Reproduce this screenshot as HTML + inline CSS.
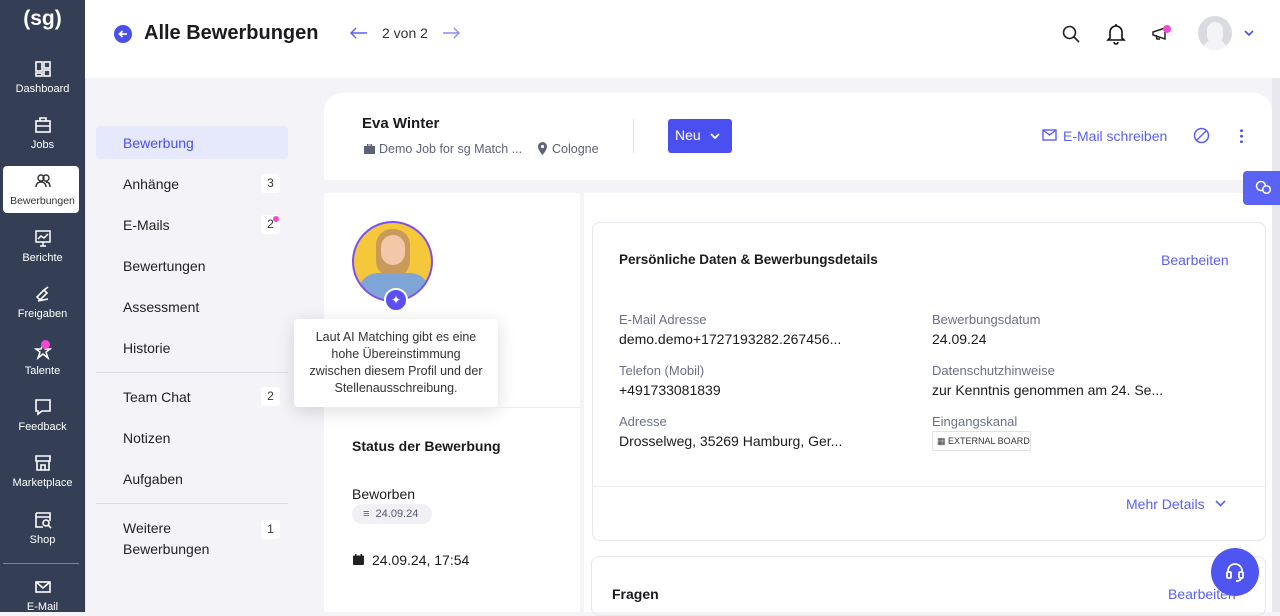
<!DOCTYPE html>
<html><head><meta charset="utf-8"><style>
*{box-sizing:border-box;margin:0;padding:0}
body{width:1280px;height:612px;overflow:hidden;background:#f4f4f8;font-family:"Liberation Sans",sans-serif;color:#1b1b1f;position:relative}
.abs{position:absolute}
#side{left:0;top:0;width:85px;height:612px;background:#343f56;color:#fff}
.si{position:absolute;left:0;width:85px;text-align:center;font-size:11px;color:#fff}
.si svg{display:block;margin:0 auto 5px}
#top{left:85px;top:0;width:1195px;height:78px;background:#fff}
.nav{position:absolute;left:96px;width:192px;font-size:14px;color:#222;padding-left:27px}
.badge{position:absolute;right:8px;top:-2px;width:19px;height:19px;background:#fff;border-radius:3px;font-size:12px;text-align:center;line-height:19px;color:#333}
.lbl{font-size:13px;color:#6b7088}
.val{font-size:14px;color:#1b1b1f;margin-top:4px}
</style></head><body>
<div id="side" class="abs">
 <div class="abs" style="left:0;top:7px;width:85px;text-align:center;font-size:21px;font-weight:bold;color:#fff">(sg)</div>
 <div class="si" style="top:60px"><svg width="18" height="18" viewBox="0 0 18 18" fill="none" stroke="#fff" stroke-width="1.6"><rect x="2" y="2" width="6" height="9"/><rect x="10" y="2" width="6" height="6"/><rect x="2" y="13" width="6" height="3"/><rect x="10" y="10" width="6" height="6"/></svg>Dashboard</div>
 <div class="si" style="top:116px"><svg width="18" height="18" viewBox="0 0 18 18" fill="none" stroke="#fff" stroke-width="1.6"><rect x="2" y="5" width="14" height="11"/><path d="M6 5V2h6v3M2 10h14"/></svg>Jobs</div>
 <div class="abs" style="left:3px;top:166px;width:76px;height:47px;background:#fff;border-radius:4px"></div>
 <div class="si" style="top:172px;color:#333;font-size:10.5px"><svg width="18" height="18" viewBox="0 0 18 18" fill="none" stroke="#333" stroke-width="1.4"><circle cx="7" cy="6" r="3"/><circle cx="12" cy="6" r="3"/><path d="M2 15c0-3 2-5 5-5s5 2 5 5M12 10c3 0 4 2 4 5"/></svg>Bewerbungen</div>
 <div class="si" style="top:229px"><svg width="18" height="18" viewBox="0 0 18 18" fill="none" stroke="#fff" stroke-width="1.5"><rect x="2" y="2" width="14" height="11"/><path d="M4 10l3-3 3 2 4-4M9 13v4M6 17h6"/></svg>Berichte</div>
 <div class="si" style="top:285px"><svg width="18" height="18" viewBox="0 0 18 18" fill="none" stroke="#fff" stroke-width="1.6"><path d="M3 12l7-7 3 3-7 7zM10 5l4-3M4 16l10-2"/></svg>Freigaben</div>
 <div class="si" style="top:342px"><svg width="18" height="18" viewBox="0 0 18 18" fill="none" stroke="#fff" stroke-width="1.5"><path d="M9 2l2 5h5l-4 3 2 6-5-4-5 4 2-6-4-3h5z"/></svg>Talente</div>
 <div class="abs" style="left:41px;top:340px;width:9px;height:9px;border-radius:50%;background:#f04bd2"></div>
 <div class="si" style="top:398px"><svg width="18" height="18" viewBox="0 0 18 18" fill="none" stroke="#fff" stroke-width="1.6"><path d="M2 2h14v11H8l-4 3v-3H2z"/></svg>Feedback</div>
 <div class="si" style="top:454px"><svg width="18" height="18" viewBox="0 0 18 18" fill="none" stroke="#fff" stroke-width="1.6"><path d="M2 2h14v5H2zM3 7v9h12V7M7 16v-5h4v5"/></svg>Marketplace</div>
 <div class="si" style="top:511px"><svg width="18" height="18" viewBox="0 0 18 18" fill="none" stroke="#fff" stroke-width="1.6"><path d="M2 2h14v8M2 2v14h7M2 6h14"/><circle cx="12" cy="12" r="3"/><path d="M14 14l3 3"/></svg>Shop</div>
 <div class="abs" style="left:3px;top:563px;width:76px;height:1px;background:#7d8598"></div>
 <div class="si" style="top:578px"><svg width="18" height="18" viewBox="0 0 18 18" fill="none" stroke="#fff" stroke-width="1.6"><rect x="2" y="4" width="14" height="10"/><path d="M2 4l7 6 7-6"/></svg>E-Mail</div>
</div>
<div id="top" class="abs">
 <svg class="abs" style="left:29px;top:25px" width="18" height="18" viewBox="0 0 18 18"><circle cx="9" cy="9" r="9" fill="#4a4ff0"/><path d="M13 9H5.5M8.5 6L5.5 9l3 3" fill="none" stroke="#fff" stroke-width="1.8"/></svg>
 <div class="abs" style="left:59px;top:22px;font-size:20px;font-weight:600">Alle Bewerbungen</div>
 <svg class="abs" style="left:265px;top:27px" width="18" height="12" viewBox="0 0 18 12" fill="none" stroke="#5a5ff2" stroke-width="1.4"><path d="M17 6H1M6 1L1 6l5 5"/></svg>
 <div class="abs" style="left:297px;top:25px;font-size:14px;color:#333">2 von 2</div>
 <svg class="abs" style="left:357px;top:27px" width="18" height="12" viewBox="0 0 18 12" fill="none" stroke="#8a8ef5" stroke-width="1.4"><path d="M1 6h16M12 1l5 5-5 5"/></svg>
 <svg class="abs" style="left:976px;top:24px" width="20" height="20" viewBox="0 0 20 20" fill="none" stroke="#222" stroke-width="1.6"><circle cx="8.5" cy="8.5" r="6"/><path d="M13 13l5 5"/></svg>
 <svg class="abs" style="left:1021px;top:23px" width="20" height="22" viewBox="0 0 20 22" fill="none" stroke="#111" stroke-width="1.6"><path d="M4 15V9a6 6 0 0112 0v6l2 2H2zM8 19a2 2 0 004 0M10 1v2"/></svg>
 <svg class="abs" style="left:1066px;top:25px" width="20" height="18" viewBox="0 0 20 18" fill="none" stroke="#222" stroke-width="1.5"><path d="M2 7l12-4v11L2 10zM5 10l1 4h3"/></svg>
 <div class="abs" style="left:1078px;top:25px;width:8px;height:8px;border-radius:50%;background:#f04bd2"></div>
 <div class="abs" style="left:1113px;top:16px;width:34px;height:34px;border-radius:50%;background:#d9dbe0;overflow:hidden"><div style="position:absolute;left:9px;top:6px;width:16px;height:22px;border-radius:8px;background:#f4f4f6"></div><div style="position:absolute;left:4px;top:24px;width:26px;height:14px;border-radius:12px 12px 0 0;background:#f4f4f6"></div></div>
 <svg class="abs" style="left:1159px;top:30px" width="10" height="7" viewBox="0 0 10 7" fill="none" stroke="#4a4ff0" stroke-width="1.6"><path d="M1 1l4 4 4-4"/></svg>
</div>
<div class="abs" style="left:85px;top:78px;width:1px;height:534px;background:#e4e4ea"></div>
<div class="abs" style="left:1272px;top:78px;width:8px;height:534px;background:#e8e8ee"></div>
<!-- left nav -->
<div class="abs" style="left:96px;top:126px;width:192px;height:33px;background:#e6e8fb;border-radius:4px"></div>
<div class="nav" style="top:135px;color:#4a4ff0">Bewerbung</div>
<div class="nav" style="top:176px">Anhänge<span class="badge">3</span></div>
<div class="nav" style="top:217px">E-Mails<span class="badge">2</span></div>
<div class="abs" style="left:273px;top:216px;width:6px;height:6px;border-radius:50%;background:#f04bd2"></div>
<div class="nav" style="top:258px">Bewertungen</div>
<div class="nav" style="top:299px">Assessment</div>
<div class="nav" style="top:340px">Historie</div>
<div class="abs" style="left:96px;top:372px;width:192px;height:1px;background:#dcdce4"></div>
<div class="nav" style="top:389px">Team Chat<span class="badge">2</span></div>
<div class="nav" style="top:430px">Notizen</div>
<div class="nav" style="top:471px">Aufgaben</div>
<div class="abs" style="left:96px;top:503px;width:192px;height:1px;background:#dcdce4"></div>
<div class="nav" style="top:518px;line-height:21px">Weitere<br>Bewerbungen<span class="badge" style="top:2px">1</span></div>
<!-- header card -->
<div class="abs" style="left:324px;top:93px;width:948px;height:87px;background:#fff;border-radius:18px 18px 0 0"></div>
<div class="abs" style="left:362px;top:115px;font-size:15px;font-weight:600">Eva Winter</div>
<svg class="abs" style="left:364px;top:144px" width="11" height="10" viewBox="0 0 11 10" fill="#5d6276"><rect x="0" y="2" width="11" height="8"/><rect x="3.5" y="0" width="4" height="2" fill="none" stroke="#5d6276"/></svg>
<div class="abs" style="left:379px;top:142px;font-size:12.5px;color:#5d6276;white-space:nowrap">Demo Job for sg Match ...</div>
<svg class="abs" style="left:538px;top:142px" width="9" height="13" viewBox="0 0 9 13" fill="#5d6276"><path d="M4.5 0A4.5 4.5 0 000 4.5C0 8 4.5 13 4.5 13S9 8 9 4.5A4.5 4.5 0 004.5 0z"/><circle cx="4.5" cy="4.5" r="1.6" fill="#fff"/></svg>
<div class="abs" style="left:552px;top:142px;font-size:12.5px;color:#5d6276">Cologne</div>
<div class="abs" style="left:633px;top:119px;width:1px;height:34px;background:#e0e0e6"></div>
<div class="abs" style="left:668px;top:119px;width:64px;height:34px;background:#4a4ff0;border-radius:3px;color:#fff;font-size:14px;padding:8px 0 0 7px">Neu</div>
<svg class="abs" style="left:710px;top:133px" width="10" height="7" viewBox="0 0 10 7" fill="none" stroke="#fff" stroke-width="1.8"><path d="M1 1l4 4 4-4"/></svg>
<svg class="abs" style="left:1042px;top:129px" width="15" height="12" viewBox="0 0 15 12" fill="none" stroke="#5a5ff2" stroke-width="1.4"><rect x="1" y="1" width="13" height="10"/><path d="M1 1l6.5 5L14 1"/></svg>
<div class="abs" style="left:1063px;top:128px;font-size:14px;color:#5a5ff2">E-Mail schreiben</div>
<svg class="abs" style="left:1193px;top:127px" width="17" height="17" viewBox="0 0 17 17" fill="none" stroke="#5a5ff2" stroke-width="1.5"><circle cx="8.5" cy="8.5" r="7"/><path d="M4 13l9-9"/></svg>
<div class="abs" style="left:1240px;top:128px;width:3px;height:15px;background:radial-gradient(circle,#4a4ff0 1.3px,transparent 1.6px) 0 0/3px 5.5px"></div>
<!-- left column -->
<div class="abs" style="left:324px;top:193px;width:256px;height:419px;background:#fff"></div>
<div class="abs" style="left:352px;top:221px;width:81px;height:81px;border-radius:50%;border:2px solid #7b4ff0;background:#f5c73a;overflow:hidden"><div style="position:absolute;left:22px;top:6px;width:34px;height:48px;border-radius:16px;background:#c99a5a"></div><div style="position:absolute;left:27px;top:12px;width:24px;height:30px;border-radius:12px;background:#f2c8a8"></div><div style="position:absolute;left:4px;top:50px;width:72px;height:40px;border-radius:20px 20px 0 0;background:#7fa4d6"></div></div>
<div class="abs" style="left:384px;top:288px;width:24px;height:24px;border-radius:50%;background:#5b4ff0;border:2px solid #fff;color:#fff;font-size:12px;text-align:center;line-height:20px">&#10022;</div>
<div class="abs" style="left:294px;top:319px;width:204px;height:88px;background:#fff;border-radius:4px;box-shadow:0 4px 18px rgba(0,0,0,.14);font-size:12.5px;color:#333;text-align:center;line-height:17px;padding:10px 12px 0">Laut AI Matching gibt es eine hohe Übereinstimmung zwischen diesem Profil und der Stellenausschreibung.</div>
<div class="abs" style="left:324px;top:407px;width:256px;height:1px;background:#ececf0"></div>
<div class="abs" style="left:352px;top:438px;font-size:14px;font-weight:600">Status der Bewerbung</div>
<div class="abs" style="left:352px;top:486px;font-size:14px">Beworben</div>
<div class="abs" style="left:352px;top:504px;width:80px;height:20px;border-radius:10px;background:#f0f0f5;font-size:11px;color:#555a70;padding:4px 0 0 11px">&#8801;&nbsp; 24.09.24</div>
<svg class="abs" style="left:353px;top:554px" width="11" height="11" viewBox="0 0 11 11" fill="#222"><rect x="0" y="1.5" width="11" height="9.5" rx="1"/><rect x="2" y="0" width="1.5" height="3"/><rect x="7.5" y="0" width="1.5" height="3"/></svg>
<div class="abs" style="left:372px;top:552px;font-size:14px">24.09.24, 17:54</div>
<div class="abs" style="left:580px;top:193px;width:4px;height:419px;background:#f4f4f8"></div>
<!-- right area -->
<div class="abs" style="left:584px;top:193px;width:688px;height:419px;background:#fff"></div>
<div class="abs" style="left:592px;top:222px;width:674px;height:319px;border:1px solid #e6e6ec;border-radius:8px"></div>
<div class="abs" style="left:619px;top:252px;font-size:13.5px;font-weight:600">Persönliche Daten &amp; Bewerbungsdetails</div>
<div class="abs" style="left:1161px;top:252px;font-size:14px;color:#5a5ff2">Bearbeiten</div>
<div class="abs" style="left:619px;top:312px"><div class="lbl">E-Mail Adresse</div><div class="val">demo.demo+1727193282.267456...</div></div>
<div class="abs" style="left:619px;top:363px"><div class="lbl">Telefon (Mobil)</div><div class="val">+491733081839</div></div>
<div class="abs" style="left:619px;top:414px"><div class="lbl">Adresse</div><div class="val">Drosselweg, 35269 Hamburg, Ger...</div></div>
<div class="abs" style="left:932px;top:312px"><div class="lbl">Bewerbungsdatum</div><div class="val">24.09.24</div></div>
<div class="abs" style="left:932px;top:363px"><div class="lbl">Datenschutzhinweise</div><div class="val">zur Kenntnis genommen am 24. Se...</div></div>
<div class="abs" style="left:932px;top:414px"><div class="lbl">Eingangskanal</div></div>
<div class="abs" style="left:932px;top:431px;width:99px;height:20px;border:1px solid #e0e0e6;border-radius:2px;font-size:9px;color:#333;padding:4px 0 0 4px;white-space:nowrap;overflow:hidden">&#9638; EXTERNAL BOARD</div>
<div class="abs" style="left:592px;top:486px;width:674px;height:1px;background:#ececf0"></div>
<div class="abs" style="left:1126px;top:496px;font-size:14px;color:#5a5ff2">Mehr Details</div>
<svg class="abs" style="left:1215px;top:500px" width="11" height="7" viewBox="0 0 11 7" fill="none" stroke="#5a5ff2" stroke-width="1.6"><path d="M1 1l4.5 4.5L10 1"/></svg>
<div class="abs" style="left:591px;top:556px;width:675px;height:60px;border:1px solid #e6e6ec;border-radius:8px"></div>
<div class="abs" style="left:612px;top:586px;font-size:14px;font-weight:600">Fragen</div>
<div class="abs" style="left:1168px;top:586px;font-size:14px;color:#5a5ff2">Bearbeiten</div>
<div class="abs" style="left:1243px;top:171px;width:37px;height:34px;background:#5b63f5;border-radius:4px 0 0 4px"></div>
<svg class="abs" style="left:1255px;top:180px" width="17" height="16" viewBox="0 0 17 16" fill="none" stroke="#fff" stroke-width="1.5"><circle cx="6" cy="6" r="4.5"/><circle cx="11.5" cy="9.5" r="3.8" fill="#5b63f5"/></svg>
<div class="abs" style="left:1211px;top:548px;width:48px;height:48px;border-radius:50%;background:#4f55f0"></div>
<svg class="abs" style="left:1224px;top:561px" width="22" height="22" viewBox="0 0 22 22" fill="none" stroke="#fff" stroke-width="1.8"><path d="M4 12V10a7 7 0 0114 0v2"/><rect x="3" y="11" width="4" height="6" rx="1"/><rect x="15" y="11" width="4" height="6" rx="1"/><path d="M17 17c0 2-2 3-5 3"/></svg>
</body></html>
